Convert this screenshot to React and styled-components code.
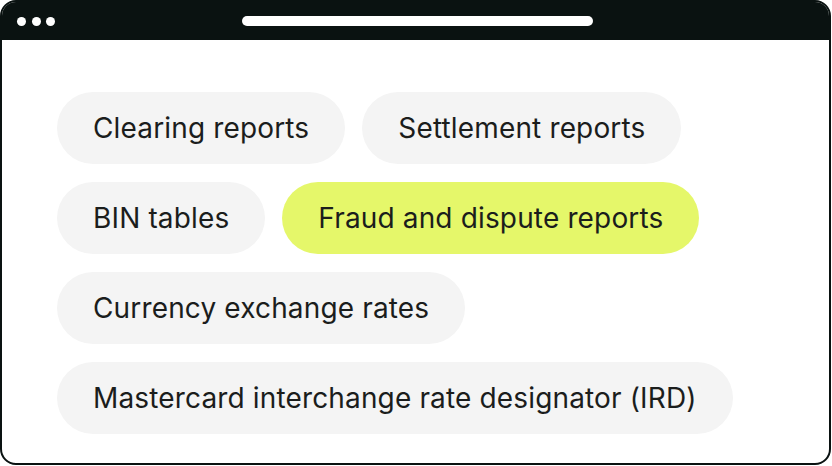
import React from 'react';
import styled, { createGlobalStyle } from 'styled-components';

const GlobalStyle = createGlobalStyle`
    html, body {
        margin: 0;
        padding: 0;
        background: #ffffff;
    }
`;

const items = [
    ['Clearing reports', 'Settlement reports'],
    ['BIN tables', { label: 'Fraud and dispute reports', active: true }],
    ['Currency exchange rates'],
    ['Mastercard interchange rate designator (IRD)'],
];

const App = () => {
    return (
        <>
            <GlobalStyle />
            <Window>
                <TopBar>
                    <Dots>
                        <Dot />
                        <Dot />
                        <Dot />
                    </Dots>
                    <AddressBar />
                </TopBar>
                <Content>
                    {items.map((row, i) => (
                        <Row key={i}>
                            {row.map((item) => {
                                const label = typeof item === 'string' ? item : item.label;
                                const active = typeof item !== 'string' && item.active;
                                return (
                                    <Pill key={label} $active={active}>
                                        {label}
                                    </Pill>
                                );
                            })}
                        </Row>
                    ))}
                </Content>
            </Window>
        </>
    );
};

const Window = styled.div`
    box-sizing: border-box;
    width: 831px;
    height: 465px;
    border: 2px solid #0a1211;
    border-radius: 16px;
    overflow: hidden;
    background: #ffffff;
    display: flex;
    flex-direction: column;
`;

const TopBar = styled.div`
    height: 38px;
    background: #0a1211;
    display: flex;
    align-items: center;
    padding: 0 0 0 15px;
    flex-shrink: 0;
`;

const Dots = styled.div`
    display: flex;
    gap: 5.5px;
`;

const Dot = styled.span`
    width: 9px;
    height: 9px;
    border-radius: 50%;
    background: #ffffff;
`;

const AddressBar = styled.div`
    width: 351px;
    height: 10px;
    border-radius: 6px;
    background: #ffffff;
    margin-left: 187px;
    margin-top: -1px;
`;

const Content = styled.div`
    display: flex;
    flex-direction: column;
    gap: 18px;
    padding: 52px 0 0 55px;
`;

const Row = styled.div`
    display: flex;
    gap: 17px;
`;

const Pill = styled.div`
    height: 72px;
    box-sizing: border-box;
    padding: 0 36px;
    border-radius: 36px;
    display: flex;
    align-items: center;
    background: ${(p) => (p.$active ? '#e5f76a' : '#f4f4f4')};
    color: #1b1d1c;
    font-family: Inter, 'Liberation Sans', sans-serif;
    font-size: 28px;
    letter-spacing: 0.15px;
    white-space: nowrap;
`;

export default App;
